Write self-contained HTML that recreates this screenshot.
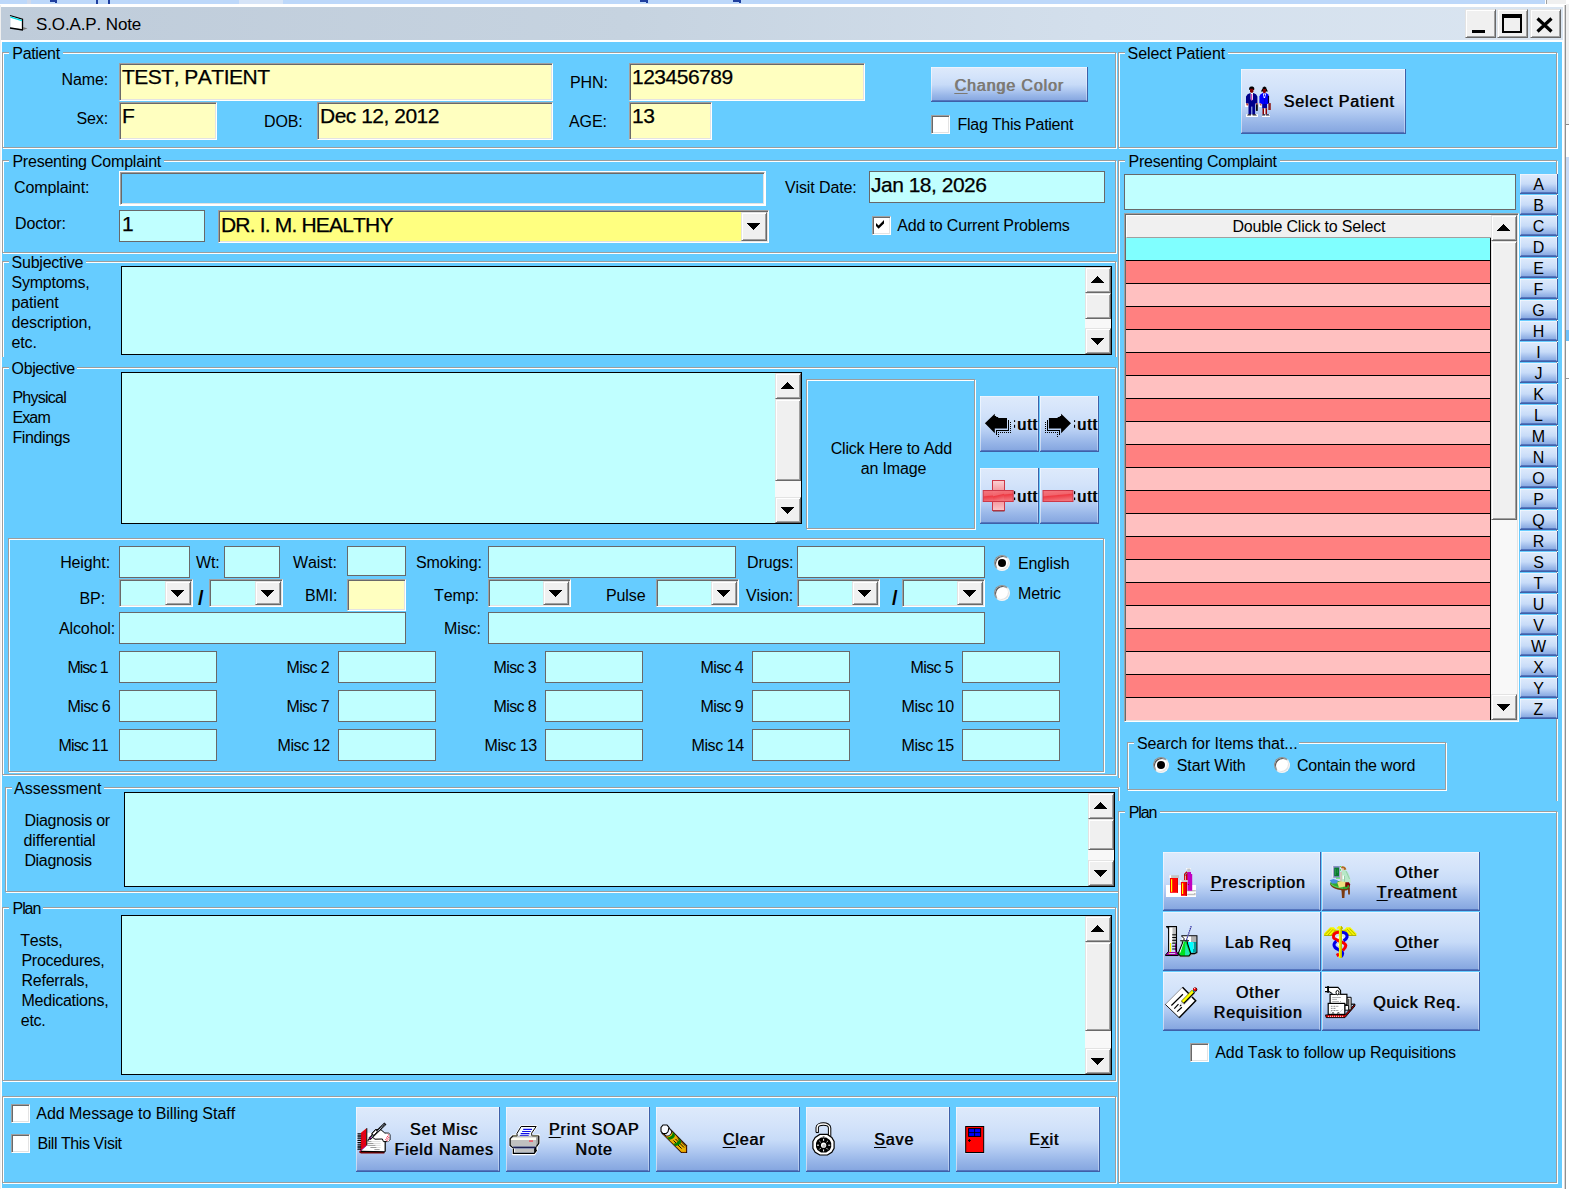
<!DOCTYPE html>
<html><head><meta charset="utf-8"><title>S.O.A.P. Note</title>
<style>
html,body{margin:0;padding:0}
body{width:1569px;height:1189px;overflow:hidden;background:#fff;position:relative;font-family:"Liberation Sans",sans-serif;font-kerning:none;color:#000}
body *{position:absolute;box-sizing:border-box}
.t{white-space:nowrap;font-size:16px;letter-spacing:-0.12px}
.fbg{background:#66CCFF}
.fr{border:1px solid #9D9D9D;box-shadow:1px 1px 0 #fff, inset 1px 1px 0 #fff}
.fl{background:#66CCFF}
.sunk{border:1px solid;border-color:#A0A0A0 #fff #fff #A0A0A0;box-shadow:inset 1px 1px 0 #696969, inset -1px -1px 0 #E3E3E3;overflow:hidden}
.flat{border:1px solid #707070;overflow:hidden}
.et{white-space:nowrap;letter-spacing:-0.5px;-webkit-text-stroke:0.25px #000}
.ta{border:1px solid #000;background:#C0FFFF}
.btn{background:linear-gradient(#DEEAFB 0%,#D3E3FA 30%,#C7DBF8 52%,#B0C9F1 68%,#98B6E8 84%,#84A5DF 100%);border-right:1px solid #3F60A8;border-bottom:1px solid #3F60A8;box-shadow:inset -1px 0 0 rgba(255,255,255,.35),inset 0 1px 0 rgba(255,255,255,.45),inset 1px 0 0 rgba(255,255,255,.5),inset 0 -1px 0 #5475BE;overflow:hidden}
.bt{width:200px;text-align:center;white-space:nowrap;font-size:16px;line-height:18px;letter-spacing:0.88px;text-shadow:0.75px 0 0 rgba(0,0,0,.8)}
.bt u{position:static;text-decoration:underline;text-decoration-thickness:1px;text-underline-offset:2px}
.sb{background:#F8F8F8}
.sbb{background:#F0F0F0;border:1px solid;border-color:#E3E3E3 #696969 #696969 #E3E3E3;box-shadow:inset 1px 1px 0 #fff,inset -1px -1px 0 #A0A0A0}
.ar{left:50%;top:50%;margin-left:-7px;margin-top:-4px}
.chk{width:19px;height:19px;background:#fff;border:1px solid;border-color:#A0A0A0 #fff #fff #A0A0A0;box-shadow:inset 1px 1px 0 #696969, inset -1px -1px 0 #E3E3E3}
.rad{width:16px;height:16px;border-radius:50%;background:#fff;border:1px solid;border-color:#909090 #F4F4F4 #F4F4F4 #909090;box-shadow:inset 1px 1px 0 #555,inset -1px -1px 0 #E3E3E3}
.rad i{left:3px;top:3px;width:8px;height:8px;border-radius:50%;background:#000}
.az{font-size:16px;line-height:18px;text-align:center}

</style></head>
<body>
<div style="left:0;top:0;width:1569px;height:4px;background:#F0F0F0"></div>
<div style="left:0;top:0;width:1545px;height:4px;background:#BDD8FA"></div>
<div style="left:1545px;top:0;width:1px;height:4px;background:#fff"></div><div style="left:1546px;top:0;width:1px;height:4px;background:#A0A0A0"></div>
<div style="left:50px;top:0;width:7px;height:2px;background:#1F3F9F"></div>
<div style="left:55px;top:0;width:2px;height:3px;background:#1F3F9F"></div>
<div style="left:96px;top:0;width:2px;height:4px;background:#1F3F9F"></div>
<div style="left:108px;top:0;width:2px;height:4px;background:#1F3F9F"></div>
<div style="left:640px;top:0;width:8px;height:2px;background:#1F3F9F"></div>
<div style="left:646px;top:0;width:2px;height:3px;background:#1F3F9F"></div>
<div style="left:733px;top:0;width:8px;height:2px;background:#1F3F9F"></div>
<div style="left:739px;top:0;width:2px;height:3px;background:#1F3F9F"></div>
<div style="left:27px;top:0;width:4px;height:4px;background:#D0DAEC"></div>
<div style="left:239px;top:0;width:44px;height:4px;background:#D6E4F7"></div>
<div style="left:1566px;top:0;width:3px;height:1189px;background:#fff"></div>
<div style="left:1566px;top:4px;width:3px;height:120px;background:#F0F0F0"></div>
<div style="left:1566px;top:124px;width:3px;height:1px;background:#8A8A8A"></div>
<div style="left:1566px;top:157px;width:3px;height:173px;background:#C5DAF7"></div>
<div style="left:1566px;top:330px;width:3px;height:11px;background:#6CC0FA"></div>
<div style="left:1566px;top:378px;width:3px;height:1px;background:#9A9A9A"></div>
<div style="left:0;top:4px;width:1566px;height:1185px;background:#fff"></div>
<div style="left:0;top:5px;width:1px;height:1184px;background:#F0F0F0"></div>
<div style="left:1565px;top:5px;width:1px;height:1184px;background:#909090"></div>
<div style="left:1564px;top:5px;width:1px;height:1184px;background:#D8D8D8"></div>
<div style="left:1px;top:7px;width:1562px;height:33px;background:linear-gradient(90deg,#BFCCDA 0%,#C6D3E0 40%,#D3DFEC 70%,#DAE5F1 100%)"></div>
<svg style="left:9px;top:14px" width="20" height="18" viewBox="0 0 20 18"><path d="M1.5 2L13.5 5.5L13.5 15.5L1.5 13.5Z" fill="#fff"/><path d="M1 1.5L13.5 5.2V16M1 14L14 16" stroke="#000" stroke-width="1.3" fill="none"/><path d="M1.5 3.2L13 6.6" stroke="#00E0E8" stroke-width="1.2"/><path d="M14 13L18.5 14.5L14 16Z" fill="#777"/></svg>
<div class="t " style="left:36px;top:15px;font-size:17px;line-height:20px;">S.O.A.P. Note</div>
<div class="sbb" style="left:1465px;top:9px;width:31px;height:29px;background:#F0F0F0"><div style="left:6px;top:20px;width:13px;height:3px;background:#000"></div></div>
<div class="sbb" style="left:1497px;top:9px;width:31px;height:29px;background:#F0F0F0"><div style="left:4px;top:4px;width:20px;height:19px;border:2px solid #000;border-top-width:4px"></div></div>
<div class="sbb" style="left:1530px;top:9px;width:31px;height:29px;background:#F0F0F0"><svg style="left:5px;top:7px" width="17" height="16" viewBox="0 0 17 16"><path d="M1.5 1.5L15.5 14.5M15.5 1.5L1.5 14.5" stroke="#000" stroke-width="3.2"/></svg></div>
<div style="left:2px;top:42px;width:1560px;height:1146px;background:#66CCFF"></div>
<div class="fr" style="left:2px;top:52px;width:1114px;height:96px"></div>
<div class="fbg" style="left:9px;top:52px;width:54px;height:2px"></div>
<div class="t" style="left:12.30px;top:45px;font-size:16px;line-height:18px;letter-spacing:-0.334px">Patient</div>
<div class="t " style="right:1461px;top:71px;font-size:16px;line-height:18px;">Name:</div>
<div class="sunk" style="left:119px;top:63px;width:434px;height:38px;background:#FFFFC0"><span class="et" style="left:2px;top:1px;font-size:21px;line-height:24px">TEST, PATIENT</span></div>
<div class="t " style="right:1461px;top:110px;font-size:16px;line-height:18px;">Sex:</div>
<div class="sunk" style="left:119px;top:102px;width:98px;height:38px;background:#FFFFC0"><span class="et" style="left:2px;top:1px;font-size:21px;line-height:24px">F</span></div>
<div class="t " style="left:264px;top:113px;font-size:16px;line-height:18px;">DOB:</div>
<div class="sunk" style="left:317px;top:102px;width:236px;height:38px;background:#FFFFC0"><span class="et" style="left:2px;top:1px;font-size:21px;line-height:24px">Dec 12, 2012</span></div>
<div class="t " style="left:570px;top:74px;font-size:16px;line-height:18px;">PHN:</div>
<div class="sunk" style="left:629px;top:63px;width:236px;height:38px;background:#FFFFC0"><span class="et" style="left:2px;top:1px;font-size:21px;line-height:24px">123456789</span></div>
<div class="t " style="left:569px;top:113px;font-size:16px;line-height:18px;">AGE:</div>
<div class="sunk" style="left:629px;top:102px;width:83px;height:38px;background:#FFFFC0"><span class="et" style="left:2px;top:1px;font-size:21px;line-height:24px">13</span></div>
<div class="btn " style="left:931px;top:67px;width:157px;height:35px"><div class="bt" style="left:-22px;top:10px;color:#7C7973;text-shadow:0.8px 0 0 #7C7973"><u>C</u>hange Color</div></div>
<div class="chk" style="left:931px;top:115px"></div>
<div class="t" style="left:957.50px;top:116px;line-height:18px;letter-spacing:-0.264px;">Flag This Patient</div>
<div class="fr" style="left:2px;top:160px;width:1114px;height:93px"></div>
<div class="fbg" style="left:9px;top:160px;width:155px;height:2px"></div>
<div class="t" style="left:12.40px;top:153px;font-size:16px;line-height:18px;letter-spacing:-0.213px">Presenting Complaint</div>
<div class="t " style="left:14px;top:179px;font-size:16px;line-height:18px;">Complaint:</div>
<div style="left:119px;top:171px;width:647px;height:35px;border:1px solid #fff"></div>
<div class="sunk" style="left:120px;top:172px;width:645px;height:33px;background:#66CCFF"></div>
<div class="t " style="left:785px;top:179px;font-size:16px;line-height:18px;">Visit Date:</div>
<div class="flat" style="left:869px;top:171px;width:236px;height:32px;background:#C0FFFF;border-color:#686868"><span class="et" style="left:1px;top:1px;font-size:21px;line-height:24px">Jan 18, 2026</span></div>
<div class="t " style="left:15px;top:215px;font-size:16px;line-height:18px;">Doctor:</div>
<div class="flat" style="left:119px;top:210px;width:86px;height:32px;background:#C0FFFF;border-color:#686868"><span class="et" style="left:2px;top:1px;font-size:21px;line-height:24px">1</span></div>
<div class="sunk" style="left:218px;top:210px;width:551px;height:33px;background:#FFFF80"><span class="et" style="left:2px;top:2px;font-size:21px;line-height:24px"><span style="position:static;letter-spacing:-0.82px">DR. I. M. HEALTHY</span></span><div class="sbb" style="right:1px;top:1px;width:26px;height:29px"><svg style="left:5px;top:10px" width="13" height="7" viewBox="0 0 13 7" shape-rendering="crispEdges"><path d="M0 0h13v1h-13zM1 1h11v1h-11zM2 2h9v1h-9zM3 3h7v1h-7zM4 4h5v1h-5zM5 5h3v1h-3zM6 6h1v1h-1z" fill="#000"/></svg></div></div>
<div class="chk" style="left:872px;top:216px"><svg width="10" height="10" viewBox="0 0 10 10" style="position:absolute;left:3px;top:3px"><path d="M0 3L0 6L2.6 8.8L8 3.4L8 0L2.6 5.6Z" fill="#000"/></svg></div>
<div class="t" style="left:897.20px;top:217px;line-height:18px;letter-spacing:-0.155px;">Add to Current Problems</div>
<div class="fr" style="left:2px;top:261px;width:1114px;height:104px"></div>
<div class="fbg" style="left:9px;top:261px;width:77px;height:2px"></div>
<div class="t" style="left:11.50px;top:254px;font-size:16px;line-height:18px;letter-spacing:-0.219px">Subjective</div>
<div class="t" style="left:11.50px;top:274px;line-height:18px;letter-spacing:-0.237px;">Symptoms,</div>
<div class="t" style="left:11.50px;top:294px;line-height:18px;letter-spacing:-0.123px;">patient</div>
<div class="t" style="left:11.50px;top:314px;line-height:18px;letter-spacing:-0.140px;">description,</div>
<div class="t" style="left:11.50px;top:334px;line-height:18px;letter-spacing:-0.153px;">etc.</div>
<div class="ta" style="left:121px;top:266px;width:991px;height:89px"></div>
<div class="sb" style="left:1085px;top:267px;width:26px;height:87px"><div class="sbb" style="left:0;top:0;width:26px;height:26px"><svg style="left:5px;top:8px" width="13" height="7" viewBox="0 0 13 7" shape-rendering="crispEdges"><path d="M6 0h1v1h-1zM5 1h3v1h-3zM4 2h5v1h-5zM3 3h7v1h-7zM2 4h9v1h-9zM1 5h11v1h-11zM0 6h13v1h-13z" fill="#000"/></svg></div><div class="sbb" style="left:0;top:61px;width:26px;height:26px"><svg style="left:5px;top:9px" width="13" height="7" viewBox="0 0 13 7" shape-rendering="crispEdges"><path d="M0 0h13v1h-13zM1 1h11v1h-11zM2 2h9v1h-9zM3 3h7v1h-7zM4 4h5v1h-5zM5 5h3v1h-3zM6 6h1v1h-1z" fill="#000"/></svg></div><div class="sbb" style="left:0;top:26px;width:26px;height:26px"></div></div>
<div class="fbg" style="left:2px;top:357px;width:1115px;height:419px"></div>
<div class="fr" style="left:2px;top:367px;width:1114px;height:408px"></div>
<div class="fbg" style="left:9px;top:367px;width:68px;height:2px"></div>
<div class="t" style="left:11.60px;top:360px;font-size:16px;line-height:18px;letter-spacing:-0.393px">Objective</div>
<div class="t" style="left:12.40px;top:389px;line-height:18px;letter-spacing:-0.735px;">Physical</div>
<div class="t" style="left:12.40px;top:409px;line-height:18px;letter-spacing:-0.859px;">Exam</div>
<div class="t" style="left:12.40px;top:429px;line-height:18px;letter-spacing:-0.376px;">Findings</div>
<div class="ta" style="left:121px;top:372px;width:681px;height:152px"></div>
<div class="sb" style="left:775px;top:373px;width:26px;height:150px"><div class="sbb" style="left:0;top:0;width:26px;height:26px"><svg style="left:5px;top:8px" width="13" height="7" viewBox="0 0 13 7" shape-rendering="crispEdges"><path d="M6 0h1v1h-1zM5 1h3v1h-3zM4 2h5v1h-5zM3 3h7v1h-7zM2 4h9v1h-9zM1 5h11v1h-11zM0 6h13v1h-13z" fill="#000"/></svg></div><div class="sbb" style="left:0;top:124px;width:26px;height:26px"><svg style="left:5px;top:9px" width="13" height="7" viewBox="0 0 13 7" shape-rendering="crispEdges"><path d="M0 0h13v1h-13zM1 1h11v1h-11zM2 2h9v1h-9zM3 3h7v1h-7zM4 4h5v1h-5zM5 5h3v1h-3zM6 6h1v1h-1z" fill="#000"/></svg></div><div class="sbb" style="left:0;top:26px;width:26px;height:82px"></div></div>
<div class="fr" style="left:806px;top:379px;width:169px;height:150px"></div>
<div class="t" style="left:830.70px;top:440px;line-height:18px;letter-spacing:-0.193px;">Click Here to Add</div>
<div class="t" style="left:860.70px;top:460px;line-height:18px;letter-spacing:-0.151px;">an Image</div>
<div class="btn " style="left:980px;top:396px;width:59px;height:56px"><svg style="left:0;top:0" width="59" height="56" viewBox="0 0 59 56"><g transform="translate(-2,4)"><path d="M6.9 23.3L16.8 13.7V16L18.2 16L18.2 17L20.2 17V18.1H29V28.6H16.8V33.2Z" fill="#000"/><path d="M30.5 20V30.5H18.5V35" stroke="#000" stroke-width="1" fill="none" shape-rendering="crispEdges"/><path d="M32.5 22V32.5H20.5V37" stroke="#000" stroke-width="1" stroke-dasharray="1 1" fill="none" shape-rendering="crispEdges"/><rect x="36" y="20.2" width="1.1" height="1.8" fill="#000"/><rect x="36" y="24.8" width="1.1" height="3" fill="#000"/></g></svg><div class="t" style="left:37px;top:20px;font-size:16px;line-height:18px;letter-spacing:1px;text-shadow:0.8px 0 0 #000">utt</div></div>
<div class="btn " style="left:1040px;top:396px;width:59px;height:56px"><svg style="left:0;top:0" width="59" height="56" viewBox="0 0 59 56"><g transform="translate(37.9,4)"><g transform="scale(-1,1)"><path d="M6.9 23.3L16.8 13.7V16L18.2 16L18.2 17L20.2 17V18.1H29V28.6H16.8V33.2Z" fill="#000"/><path d="M30.5 20V30.5H18.5V35" stroke="#000" stroke-width="1" fill="none" shape-rendering="crispEdges"/><path d="M32.5 22V32.5H20.5V37" stroke="#000" stroke-width="1" stroke-dasharray="1 1" fill="none" shape-rendering="crispEdges"/><rect x="2.8" y="20.2" width="1.1" height="1.8" fill="#000"/><rect x="2.8" y="24.8" width="1.1" height="3" fill="#000"/></g></g></svg><div class="t" style="left:37px;top:20px;font-size:16px;line-height:18px;letter-spacing:1px;text-shadow:0.8px 0 0 #000">utt</div></div>
<div class="btn " style="left:980px;top:468px;width:59px;height:56px"><svg style="left:0;top:0" width="59" height="56" viewBox="0 0 59 56"><defs><linearGradient id="pv" x1="0" y1="0" x2="0" y2="1"><stop offset="0" stop-color="#FBD2D4"/><stop offset="0.3" stop-color="#F6A0A6"/><stop offset="0.5" stop-color="#EE3A44"/><stop offset="0.7" stop-color="#F59AA0"/><stop offset="1" stop-color="#FAC6CA"/></linearGradient><linearGradient id="ph" x1="0" y1="0" x2="0.25" y2="1"><stop offset="0" stop-color="#F47880"/><stop offset="0.45" stop-color="#F2646C"/><stop offset="0.55" stop-color="#EE3A44"/><stop offset="1" stop-color="#F27078"/></linearGradient></defs><rect x="12.5" y="12.5" width="12" height="30" fill="url(#pv)" stroke="#CC3848" stroke-width="1"/><rect x="3.2" y="22.5" width="30" height="11" fill="url(#ph)" stroke="#CC3848" stroke-width="1"/><rect x="13" y="23" width="11" height="10" fill="url(#ph)"/><rect x="13" y="42.6" width="11.5" height="0.9" fill="#8A3038"/><rect x="34" y="23.2" width="1.2" height="3" fill="#000"/><rect x="34" y="29.5" width="1.2" height="2.6" fill="#000"/></svg><div class="t" style="left:37px;top:20px;font-size:16px;line-height:18px;letter-spacing:1px;text-shadow:0.8px 0 0 #000">utt</div></div>
<div class="btn " style="left:1040px;top:468px;width:59px;height:56px"><svg style="left:0;top:0" width="59" height="56" viewBox="0 0 59 56"><rect x="3" y="22.5" width="30" height="11" fill="url(#ph)" stroke="#CC3848" stroke-width="1"/><rect x="34" y="23.2" width="1.2" height="3" fill="#000"/><rect x="34" y="29.5" width="1.2" height="2.6" fill="#000"/></svg><div class="t" style="left:37px;top:20px;font-size:16px;line-height:18px;letter-spacing:1px;text-shadow:0.8px 0 0 #000">utt</div></div>
<div class="fr" style="left:8px;top:538px;width:1096px;height:234px"></div>
<div class="t " style="right:1459px;top:554px;font-size:16px;line-height:18px;">Height:</div>
<div class="flat" style="left:119px;top:546px;width:71px;height:32px;background:#C0FFFF;border-color:#686868"></div>
<div class="t " style="left:196px;top:554px;font-size:16px;line-height:18px;">Wt:</div>
<div class="flat" style="left:224px;top:546px;width:56px;height:32px;background:#C0FFFF;border-color:#686868"></div>
<div class="t " style="left:293px;top:554px;font-size:16px;line-height:18px;">Waist:</div>
<div class="flat" style="left:347px;top:546px;width:59px;height:30px;background:#C0FFFF;border-color:#686868"></div>
<div class="t " style="left:416px;top:554px;font-size:16px;line-height:18px;">Smoking:</div>
<div class="flat" style="left:488px;top:546px;width:248px;height:32px;background:#C0FFFF;border-color:#686868"></div>
<div class="t " style="left:747px;top:554px;font-size:16px;line-height:18px;">Drugs:</div>
<div class="flat" style="left:797px;top:546px;width:188px;height:32px;background:#C0FFFF;border-color:#686868"></div>
<div class="rad" style="left:994px;top:555px"><i></i></div>
<div class="t " style="left:1018px;top:555px;font-size:16px;line-height:18px;">English</div>
<div class="t " style="right:1464px;top:590px;font-size:16px;line-height:18px;">BP:</div>
<div class="sunk" style="left:119px;top:579px;width:74px;height:28px;background:#C0FFFF"><div class="sbb" style="right:1px;top:1px;width:26px;height:24px"><svg style="left:5px;top:8px" width="13" height="7" viewBox="0 0 13 7" shape-rendering="crispEdges"><path d="M0 0h13v1h-13zM1 1h11v1h-11zM2 2h9v1h-9zM3 3h7v1h-7zM4 4h5v1h-5zM5 5h3v1h-3zM6 6h1v1h-1z" fill="#000"/></svg></div></div>
<div class="t " style="left:198px;top:587px;font-size:20px;line-height:22px;font-weight:bold">/</div>
<div class="sunk" style="left:209px;top:579px;width:74px;height:28px;background:#C0FFFF"><div class="sbb" style="right:1px;top:1px;width:26px;height:24px"><svg style="left:5px;top:8px" width="13" height="7" viewBox="0 0 13 7" shape-rendering="crispEdges"><path d="M0 0h13v1h-13zM1 1h11v1h-11zM2 2h9v1h-9zM3 3h7v1h-7zM4 4h5v1h-5zM5 5h3v1h-3zM6 6h1v1h-1z" fill="#000"/></svg></div></div>
<div class="t " style="left:305px;top:587px;font-size:16px;line-height:18px;">BMI:</div>
<div class="sunk" style="left:347px;top:579px;width:59px;height:32px;background:#FFFFC0"></div>
<div class="t " style="left:434px;top:587px;font-size:16px;line-height:18px;">Temp:</div>
<div class="sunk" style="left:488px;top:579px;width:83px;height:28px;background:#C0FFFF"><div class="sbb" style="right:1px;top:1px;width:26px;height:24px"><svg style="left:5px;top:8px" width="13" height="7" viewBox="0 0 13 7" shape-rendering="crispEdges"><path d="M0 0h13v1h-13zM1 1h11v1h-11zM2 2h9v1h-9zM3 3h7v1h-7zM4 4h5v1h-5zM5 5h3v1h-3zM6 6h1v1h-1z" fill="#000"/></svg></div></div>
<div class="t " style="left:606px;top:587px;font-size:16px;line-height:18px;">Pulse</div>
<div class="sunk" style="left:656px;top:579px;width:83px;height:28px;background:#C0FFFF"><div class="sbb" style="right:1px;top:1px;width:26px;height:24px"><svg style="left:5px;top:8px" width="13" height="7" viewBox="0 0 13 7" shape-rendering="crispEdges"><path d="M0 0h13v1h-13zM1 1h11v1h-11zM2 2h9v1h-9zM3 3h7v1h-7zM4 4h5v1h-5zM5 5h3v1h-3zM6 6h1v1h-1z" fill="#000"/></svg></div></div>
<div class="t " style="left:746px;top:587px;font-size:16px;line-height:18px;">Vision:</div>
<div class="sunk" style="left:797px;top:579px;width:83px;height:28px;background:#C0FFFF"><div class="sbb" style="right:1px;top:1px;width:26px;height:24px"><svg style="left:5px;top:8px" width="13" height="7" viewBox="0 0 13 7" shape-rendering="crispEdges"><path d="M0 0h13v1h-13zM1 1h11v1h-11zM2 2h9v1h-9zM3 3h7v1h-7zM4 4h5v1h-5zM5 5h3v1h-3zM6 6h1v1h-1z" fill="#000"/></svg></div></div>
<div class="t " style="left:892px;top:587px;font-size:20px;line-height:22px;font-weight:bold">/</div>
<div class="sunk" style="left:902px;top:579px;width:83px;height:28px;background:#C0FFFF"><div class="sbb" style="right:1px;top:1px;width:26px;height:24px"><svg style="left:5px;top:8px" width="13" height="7" viewBox="0 0 13 7" shape-rendering="crispEdges"><path d="M0 0h13v1h-13zM1 1h11v1h-11zM2 2h9v1h-9zM3 3h7v1h-7zM4 4h5v1h-5zM5 5h3v1h-3zM6 6h1v1h-1z" fill="#000"/></svg></div></div>
<div class="rad" style="left:994px;top:585px"></div>
<div class="t " style="left:1018px;top:585px;font-size:16px;line-height:18px;">Metric</div>
<div class="t " style="left:59px;top:620px;font-size:16px;line-height:18px;">Alcohol:</div>
<div class="flat" style="left:119px;top:612px;width:287px;height:32px;background:#C0FFFF;border-color:#686868"></div>
<div class="t " style="left:444px;top:620px;font-size:16px;line-height:18px;">Misc:</div>
<div class="flat" style="left:488px;top:612px;width:497px;height:32px;background:#C0FFFF;border-color:#686868"></div>
<div class="flat" style="left:119px;top:651px;width:98px;height:32px;background:#C0FFFF;border-color:#686868"></div>
<div class="t" style="left:67.50px;top:659px;line-height:18px;letter-spacing:-1.029px;">Misc 1</div>
<div class="flat" style="left:338px;top:651px;width:98px;height:32px;background:#C0FFFF;border-color:#686868"></div>
<div class="t" style="left:286.50px;top:659px;line-height:18px;letter-spacing:-0.609px;">Misc 2</div>
<div class="flat" style="left:545px;top:651px;width:98px;height:32px;background:#C0FFFF;border-color:#686868"></div>
<div class="t" style="left:493.50px;top:659px;line-height:18px;letter-spacing:-0.609px;">Misc 3</div>
<div class="flat" style="left:752px;top:651px;width:98px;height:32px;background:#C0FFFF;border-color:#686868"></div>
<div class="t" style="left:700.50px;top:659px;line-height:18px;letter-spacing:-0.609px;">Misc 4</div>
<div class="flat" style="left:962px;top:651px;width:98px;height:32px;background:#C0FFFF;border-color:#686868"></div>
<div class="t" style="left:910.50px;top:659px;line-height:18px;letter-spacing:-0.609px;">Misc 5</div>
<div class="flat" style="left:119px;top:690px;width:98px;height:32px;background:#C0FFFF;border-color:#686868"></div>
<div class="t" style="left:67.50px;top:698px;line-height:18px;letter-spacing:-0.609px;">Misc 6</div>
<div class="flat" style="left:338px;top:690px;width:98px;height:32px;background:#C0FFFF;border-color:#686868"></div>
<div class="t" style="left:286.50px;top:698px;line-height:18px;letter-spacing:-0.609px;">Misc 7</div>
<div class="flat" style="left:545px;top:690px;width:98px;height:32px;background:#C0FFFF;border-color:#686868"></div>
<div class="t" style="left:493.50px;top:698px;line-height:18px;letter-spacing:-0.609px;">Misc 8</div>
<div class="flat" style="left:752px;top:690px;width:98px;height:32px;background:#C0FFFF;border-color:#686868"></div>
<div class="t" style="left:700.50px;top:698px;line-height:18px;letter-spacing:-0.609px;">Misc 9</div>
<div class="flat" style="left:962px;top:690px;width:98px;height:32px;background:#C0FFFF;border-color:#686868"></div>
<div class="t" style="left:901.50px;top:698px;line-height:18px;letter-spacing:-0.408px;">Misc 10</div>
<div class="flat" style="left:119px;top:729px;width:98px;height:32px;background:#C0FFFF;border-color:#686868"></div>
<div class="t" style="left:58.50px;top:737px;line-height:18px;letter-spacing:-0.842px;">Misc 11</div>
<div class="flat" style="left:338px;top:729px;width:98px;height:32px;background:#C0FFFF;border-color:#686868"></div>
<div class="t" style="left:277.50px;top:737px;line-height:18px;letter-spacing:-0.408px;">Misc 12</div>
<div class="flat" style="left:545px;top:729px;width:98px;height:32px;background:#C0FFFF;border-color:#686868"></div>
<div class="t" style="left:484.50px;top:737px;line-height:18px;letter-spacing:-0.408px;">Misc 13</div>
<div class="flat" style="left:752px;top:729px;width:98px;height:32px;background:#C0FFFF;border-color:#686868"></div>
<div class="t" style="left:691.50px;top:737px;line-height:18px;letter-spacing:-0.408px;">Misc 14</div>
<div class="flat" style="left:962px;top:729px;width:98px;height:32px;background:#C0FFFF;border-color:#686868"></div>
<div class="t" style="left:901.50px;top:737px;line-height:18px;letter-spacing:-0.408px;">Misc 15</div>
<div class="fbg" style="left:5px;top:778px;width:1115px;height:115px"></div>
<div class="fr" style="left:5px;top:787px;width:1114px;height:105px"></div>
<div class="fbg" style="left:12px;top:787px;width:92px;height:2px"></div>
<div class="t" style="left:14.00px;top:780px;font-size:16px;line-height:18px;letter-spacing:0.031px">Assessment</div>
<div class="t" style="left:24.40px;top:812px;line-height:18px;letter-spacing:-0.288px;">Diagnosis or</div>
<div class="t" style="left:23.60px;top:832px;line-height:18px;letter-spacing:-0.168px;">differential</div>
<div class="t" style="left:24.40px;top:852px;line-height:18px;letter-spacing:-0.327px;">Diagnosis</div>
<div class="ta" style="left:124px;top:792px;width:991px;height:95px"></div>
<div class="sb" style="left:1088px;top:793px;width:26px;height:93px"><div class="sbb" style="left:0;top:0;width:26px;height:26px"><svg style="left:5px;top:8px" width="13" height="7" viewBox="0 0 13 7" shape-rendering="crispEdges"><path d="M6 0h1v1h-1zM5 1h3v1h-3zM4 2h5v1h-5zM3 3h7v1h-7zM2 4h9v1h-9zM1 5h11v1h-11zM0 6h13v1h-13z" fill="#000"/></svg></div><div class="sbb" style="left:0;top:67px;width:26px;height:26px"><svg style="left:5px;top:9px" width="13" height="7" viewBox="0 0 13 7" shape-rendering="crispEdges"><path d="M0 0h13v1h-13zM1 1h11v1h-11zM2 2h9v1h-9zM3 3h7v1h-7zM4 4h5v1h-5zM5 5h3v1h-3zM6 6h1v1h-1z" fill="#000"/></svg></div><div class="sbb" style="left:0;top:26px;width:26px;height:31px"></div></div>
<div class="fbg" style="left:2px;top:897px;width:1115px;height:185px"></div>
<div class="fr" style="left:2px;top:907px;width:1114px;height:174px"></div>
<div class="fbg" style="left:9px;top:907px;width:34px;height:2px"></div>
<div class="t" style="left:12.60px;top:900px;font-size:16px;line-height:18px;letter-spacing:-1.114px">Plan</div>
<div class="t" style="left:20.20px;top:932px;line-height:18px;letter-spacing:-0.188px;">Tests,</div>
<div class="t" style="left:21.50px;top:952px;line-height:18px;letter-spacing:-0.306px;">Procedures,</div>
<div class="t" style="left:21.50px;top:972px;line-height:18px;letter-spacing:-0.239px;">Referrals,</div>
<div class="t" style="left:21.50px;top:992px;line-height:18px;letter-spacing:-0.249px;">Medications,</div>
<div class="t" style="left:20.80px;top:1012px;line-height:18px;letter-spacing:-0.286px;">etc.</div>
<div class="ta" style="left:121px;top:915px;width:991px;height:160px"></div>
<div class="sb" style="left:1085px;top:916px;width:26px;height:158px"><div class="sbb" style="left:0;top:0;width:26px;height:26px"><svg style="left:5px;top:8px" width="13" height="7" viewBox="0 0 13 7" shape-rendering="crispEdges"><path d="M6 0h1v1h-1zM5 1h3v1h-3zM4 2h5v1h-5zM3 3h7v1h-7zM2 4h9v1h-9zM1 5h11v1h-11zM0 6h13v1h-13z" fill="#000"/></svg></div><div class="sbb" style="left:0;top:132px;width:26px;height:26px"><svg style="left:5px;top:9px" width="13" height="7" viewBox="0 0 13 7" shape-rendering="crispEdges"><path d="M0 0h13v1h-13zM1 1h11v1h-11zM2 2h9v1h-9zM3 3h7v1h-7zM4 4h5v1h-5zM5 5h3v1h-3zM6 6h1v1h-1z" fill="#000"/></svg></div><div class="sbb" style="left:0;top:26px;width:26px;height:89px"></div></div>
<div class="fr" style="left:2px;top:1096px;width:1114px;height:87px"></div>
<div class="chk" style="left:11px;top:1104px"></div>
<div class="t" style="left:36.30px;top:1105px;line-height:18px;letter-spacing:-0.049px;">Add Message to Billing Staff</div>
<div class="chk" style="left:11px;top:1134px"></div>
<div class="t" style="left:37.40px;top:1135px;line-height:18px;letter-spacing:-0.429px;">Bill This Visit</div>
<div class="btn " style="left:356px;top:1107px;width:144px;height:65px"><svg style="left:0;top:0" width="44" height="56" viewBox="0 0 44 56"><g transform="translate(-3,6)"><path d="M6.2 38.4L7.8 37.2L31.4 38.4L31.4 40.6L8 40.6L6.2 39.6Z" fill="#800000"/><path d="M14 19.8H32.4V38.4L8 38.2L14 32.4Z" fill="#fff"/><path d="M14.4 28.6H18.6M14.4 30.5H20.6M14.4 32.4H22.6M17.4 34.5H23.6M21.4 36.6H26.6" stroke="#808080" stroke-width="0.8"/><path d="M18.6 28.6H27.6M20.6 30.5H27.6M22.6 32.4H27.6M23.6 34.5H27.6" stroke="#D0D0D0" stroke-width="0.7"/><path d="M8 38.4L32 38.8M32.2 27.2V38.8" stroke="#000" stroke-width="1.2" fill="none"/><path d="M8 19.8L13.5 15.3V32.4L7.4 37.8Z" fill="#F00000"/><path d="M8.6 21.5L12.8 18M8.6 24L12.8 20.6M8.6 26.6L12.8 23.2M8.6 29.2L12.8 25.8M8.6 31.8L12.8 28.4M8.6 34.4L12.8 31" stroke="#9000A0" stroke-width="0.8" stroke-dasharray="0.9 0.9"/><path d="M13.8 15.2V32.4" stroke="#000" stroke-width="1"/><path d="M7.4 37.8L13.6 32.4" stroke="#9000A0" stroke-width="0.8"/><path d="M5 20.8H7.6M5 23H7.6M5 25.2H7.6M5 27.4H7.6M5 29.6H7.6M5 31.8H7.6M5 34H7.6M5 36.2H7.6" stroke="#000" stroke-width="1.3" stroke-linecap="round"/><path d="M18.9 20.4L22.3 16.6L28 16.8L31.8 20L35.6 20.2L37 21.4V27L34.4 28.6H30.4L29.4 26L22 26.2L19.4 24.2Z" fill="#fff" stroke="#000" stroke-width="1"/><path d="M33 20.8H36.4V27.8L34.4 28.4L31.6 27.2Z" fill="#fff"/><path d="M32.6 27L35.8 21.4M33.8 28L36.4 23.6" stroke="#F02040" stroke-width="1.2" stroke-dasharray="0.9 0.9"/><path d="M16.4 26L32.4 10.5" stroke="#000" stroke-width="3"/><path d="M18 24.5L32 11" stroke="#D8E8FF" stroke-width="1.2" stroke-dasharray="0.9 0.7"/><path d="M14.6 27.6L16.6 25.8" stroke="#000" stroke-width="1.2"/><path d="M16.6 25.4L17.8 24.2" stroke="#9000A0" stroke-width="1.4"/><path d="M19.2 20.4L22.6 17L24.4 18.6L20.6 22.6Z" fill="#fff" stroke="#000" stroke-width="0.9"/></g></svg><div class="bt" style="left:-12px;top:14px;">Set Misc</div><div class="bt" style="left:-12px;top:34px;">Field Names</div></div>
<div class="btn " style="left:506px;top:1107px;width:144px;height:65px"><svg style="left:0;top:0" width="44" height="56" viewBox="0 0 44 56"><g transform="translate(-3,6)"><path d="M18.1 13.5L33.2 13.5L28.6 20.2L29 23.5L35.9 22.5V30.4L33.6 33.6V36.6L31.4 41H10.2V35.4L7.1 32.6V25.7L10.1 22.7L14.2 22.7L13.9 20.6Z" fill="none" stroke="#fff" stroke-width="2.4" stroke-linejoin="round"/><path d="M18.1 13.5L33.2 13.5L28.6 20.2L29 23.6H14.3L13.9 20.6Z" fill="#F4FAFF" stroke="#000" stroke-width="1"/><path d="M20.2 16.4H29M19.1 18.5H27.8M17.7 20.6H26.5M16.8 22.5H25.7" stroke="#1010E8" stroke-width="1.1"/><path d="M10.1 22.7H35.7V30.3L33.2 33.6H10.1L7.1 32.4V25.7Z" fill="#C0C0C0"/><path d="M10.1 22.9L14 22.9M29.2 22.9H35.7" stroke="#505030" stroke-width="1.2"/><path d="M8 25.7L10.4 24.4H33.2V26.9H8Z" fill="#FFFFF4"/><path d="M33.2 24.4L35.7 22.7V30.3L33.2 33.6Z" fill="#A0A0A0"/><path d="M10.1 22.7L7.1 25.7V32.4L10.1 34.9M35.8 22.7V30.3L33.4 33.6" stroke="#000" stroke-width="1.2" fill="none"/><rect x="26" y="27.3" width="4" height="1.5" fill="#F05060"/><rect x="10.1" y="33.6" width="23.1" height="1.8" fill="#202050"/><path d="M10.9 35.7H31.1V39.5H10.9Z" fill="#C0C0C0"/><rect x="10.9" y="35.7" width="1.2" height="3.8" fill="#fff"/><path d="M31.1 35.7L33.4 33.6V36.8L31.1 39.8Z" fill="#000"/><path d="M10.4 35.4V40.3H31.2L33.6 37" stroke="#000" stroke-width="1.3" fill="none"/></g></svg><div class="bt" style="left:-12px;top:14px;"><u>P</u>rint SOAP</div><div class="bt" style="left:-12px;top:34px;">Note</div></div>
<div class="btn " style="left:656px;top:1107px;width:144px;height:65px"><svg style="left:0;top:0" width="44" height="56" viewBox="0 0 44 56"><g transform="translate(-3,6)"><path d="M14.3 12.6L34.1 32.4V40H28.2L8.4 20.2Z" fill="#000"/><path d="M15 14.6L33.2 32.8V39.2H28.6L10 21Z" fill="#E8B000"/><path d="M22.5 26L31 34.5M24.5 25L32.6 33M20.5 27.5L28.6 35.6" stroke="#000" stroke-width="0.9"/><path d="M15 14.6L33.2 32.8V39.2H28.6L10 21Z" fill="none" stroke="#C01000" stroke-width="0.6" stroke-dasharray="0.8 0.8"/><path d="M19.4 18.8C20.4 21.6 17.8 24.4 14 24.6L16.2 26.8C20 26.4 22.8 23.8 21.6 21Z" fill="#008000"/><path d="M25.6 25C26.6 27.8 24 30.6 20.2 30.8L22.4 33C26.2 32.6 29 30 27.8 27.2Z" fill="#008000"/><path d="M14 13.4L18.6 18C19 21 16.4 23.4 13 23L9 19Z" fill="#F0F4FF" stroke="#000" stroke-width="0.9"/><path d="M10 12L14 12L16 14.4L15 18.8L13 20.6L9.8 20.6L8 18.4V14.4Z" fill="#F8FAFF" stroke="#000" stroke-width="1.1"/></g></svg><div class="bt" style="left:-12px;top:24px;"><u>C</u>lear</div></div>
<div class="btn " style="left:806px;top:1107px;width:144px;height:65px"><svg style="left:0;top:0" width="44" height="56" viewBox="0 0 44 56"><g transform="translate(-3,6)"><path d="M14.2 19V14.6C14.2 12.2 17.2 11 20.4 11C23.6 11 26.6 12.4 26.6 15V23" stroke="#000" stroke-width="3.4" fill="none"/><path d="M14.2 19V14.6C14.2 12.2 17.2 11 20.4 11C23.6 11 26.6 12.4 26.6 15V23" stroke="#fff" stroke-width="1.4" fill="none"/><path d="M12.8 19.5H15.8" stroke="#000" stroke-width="1.1"/><path d="M16.8 21.4H24.4L28.8 24.4L31.1 28.4V35.4L28.8 39.2L24.4 42H16.8L12.2 39.2L9.9 35.4V28.4L12.2 24.4Z" fill="#fff" stroke="#000" stroke-width="1.2"/><path d="M18 24.4H23.2L26.8 27L28.2 30V34L26.8 37L23.2 39.6H18L14.4 37L13 34V30L14.4 27Z" fill="#000"/><path d="M19.4 23.4H21.8L20.6 24.8Z" fill="#000"/><path d="M20.6 25.8V27.8M20.6 36.4V38.4M14 32.2H16M25.2 32.2H27.2M16.4 28L17.6 29.2M24.8 28L23.6 29.2M16.4 36.4L17.6 35.2M24.8 36.4L23.6 35.2" stroke="#fff" stroke-width="1"/><circle cx="20.6" cy="32.2" r="2.6" fill="#fff"/><circle cx="21" cy="32.8" r="1.8" fill="#C8C8C8"/></g></svg><div class="bt" style="left:-12px;top:24px;"><u>S</u>ave</div></div>
<div class="btn " style="left:956px;top:1107px;width:144px;height:65px"><svg style="left:0;top:0" width="44" height="64" viewBox="0 0 44 64"><g transform="translate(-3,6)"><rect x="11.7" y="12.5" width="20" height="28" fill="#CFE3FF"/><rect x="12.7" y="13.5" width="18" height="26" fill="#F00" stroke="#000" stroke-width="1"/><rect x="15.6" y="15.6" width="12" height="7.8" fill="#00F" stroke="#000" stroke-width="1"/><path d="M21.6 15.6V23.4M15.6 19.6H27.6" stroke="#000" stroke-width="0.8"/><path d="M15 27.5H17.8M16.4 26.1V28.9" stroke="#000" stroke-width="1.1"/></g></svg><div class="bt" style="left:-12px;top:24px;">E<u>x</u>it</div></div>
<div class="fr" style="left:1118px;top:52px;width:439px;height:96px"></div>
<div class="fbg" style="left:1125px;top:52px;width:103px;height:2px"></div>
<div class="t" style="left:1127.60px;top:45px;font-size:16px;line-height:18px;letter-spacing:-0.089px">Select Patient</div>
<div class="btn " style="left:1241px;top:69px;width:165px;height:65px"><svg style="left:0;top:0" width="44" height="64" viewBox="0 0 44 64"><g transform="translate(-3,9)"><g fill="#fff"><rect x="8" y="36.2" width="12" height="2.8"/><rect x="24" y="36.2" width="8" height="2.8"/><rect x="7" y="25" width="3.6" height="4"/><rect x="21" y="25" width="2.6" height="4"/></g><path d="M11.2 10.2C11.2 7.8 16.2 7.8 16.2 10.2V12H11.2Z" fill="#000"/><path d="M12 10.8H15.4V13.6L14.6 14.7H12.8L12 13.6Z" fill="#800000"/><path d="M9.6 16.2L12.4 14.9H15.4L18 16.2L19.4 18.6V25.6H17.2V26.9H10.5V25.6H8V18.6Z" fill="#00008B"/><path d="M12.6 14.9H15V21.4L13.8 22.6L12.6 21.4Z" fill="#fff"/><rect x="13.1" y="16" width="1.1" height="6.4" fill="#C828B0"/><rect x="10.5" y="26.8" width="2.8" height="9.8" fill="#00008B"/><rect x="14.3" y="26.8" width="2.8" height="9.8" fill="#00008B"/><rect x="11.8" y="26.6" width="4" height="2" fill="#00008B"/><path d="M8 25.6H10.2V27.6H8.6Z" fill="#C04030"/><path d="M18 25.2H19.8V26.8H18Z" fill="#C04030"/><rect x="17.9" y="26.5" width="1.9" height="6.4" fill="#101010"/><path d="M9 37.6L10 36.2H13V37.6ZM14.6 37.6V36.2H17.6L19 37.6Z" fill="#202020"/><path d="M22.9 13.6L25.2 9.2C25.8 8.2 27.2 8.2 27.8 9.2L29.9 13.6Z" fill="#000"/><path d="M24.9 11H27.9V14L27.2 15.2H25.6L24.9 14Z" fill="#800000"/><path d="M22.4 16.4L24.6 15.1H28.2L30.2 16.4L31.1 18.6V25.6L29.2 26.1H24L21.4 25.2V18.6Z" fill="#0000FF"/><path d="M24.9 15.4H28.1L27.2 19.2L26.4 20.2L25.6 19.2Z" fill="#fff"/><path d="M26 16.2H26.9V18.2L26.4 18.8L26 18.2Z" fill="#0000FF"/><path d="M26.4 20.2V25.8" stroke="#0000C0" stroke-width="0.6"/><path d="M30.4 18V25" stroke="#000" stroke-width="0.9"/><rect x="24.2" y="26" width="4.8" height="4.4" fill="#0000A0"/><rect x="24.5" y="30.3" width="1.7" height="6.2" fill="#8B0000"/><rect x="27.3" y="30.3" width="1.7" height="6.2" fill="#8B0000"/><rect x="26.2" y="30.3" width="1.1" height="6.4" fill="#fff"/><path d="M21.5 25.6H23.2L23.6 27.6H22.2Z" fill="#D06050"/><rect x="30.4" y="25.2" width="2.3" height="6.8" fill="#7A1010"/><rect x="31.6" y="25.2" width="1.1" height="6.8" fill="#A04040"/><path d="M24 37.6L24.6 36.2H27.2V37.6ZM28 37.6L28.4 36.2H30.6L31.8 37.6Z" fill="#101030"/></g></svg><div class="bt" style="left:-2px;top:24px;">Select Patient</div></div>
<div class="fr" style="left:1118px;top:160px;width:439px;height:645px"></div>
<div class="fbg" style="left:1125px;top:160px;width:155px;height:2px"></div>
<div class="t" style="left:1128.60px;top:153px;font-size:16px;line-height:18px;letter-spacing:-0.239px">Presenting Complaint</div>
<div class="fbg" style="left:1117px;top:778px;width:4px;height:9px"></div>
<div class="flat" style="left:1124px;top:174px;width:392px;height:36px;background:#C0FFFF;border-color:#686868"></div>
<div class="btn " style="left:1520px;top:174px;width:38px;height:20px"><div class="az" style="left:0;top:2px;width:37px">A</div></div>
<div class="btn " style="left:1520px;top:195px;width:38px;height:20px"><div class="az" style="left:0;top:2px;width:37px">B</div></div>
<div class="btn " style="left:1520px;top:216px;width:38px;height:20px"><div class="az" style="left:0;top:2px;width:37px">C</div></div>
<div class="btn " style="left:1520px;top:237px;width:38px;height:20px"><div class="az" style="left:0;top:2px;width:37px">D</div></div>
<div class="btn " style="left:1520px;top:258px;width:38px;height:20px"><div class="az" style="left:0;top:2px;width:37px">E</div></div>
<div class="btn " style="left:1520px;top:279px;width:38px;height:20px"><div class="az" style="left:0;top:2px;width:37px">F</div></div>
<div class="btn " style="left:1520px;top:300px;width:38px;height:20px"><div class="az" style="left:0;top:2px;width:37px">G</div></div>
<div class="btn " style="left:1520px;top:321px;width:38px;height:20px"><div class="az" style="left:0;top:2px;width:37px">H</div></div>
<div class="btn " style="left:1520px;top:342px;width:38px;height:20px"><div class="az" style="left:0;top:2px;width:37px">I</div></div>
<div class="btn " style="left:1520px;top:363px;width:38px;height:20px"><div class="az" style="left:0;top:2px;width:37px">J</div></div>
<div class="btn " style="left:1520px;top:384px;width:38px;height:20px"><div class="az" style="left:0;top:2px;width:37px">K</div></div>
<div class="btn " style="left:1520px;top:405px;width:38px;height:20px"><div class="az" style="left:0;top:2px;width:37px">L</div></div>
<div class="btn " style="left:1520px;top:426px;width:38px;height:20px"><div class="az" style="left:0;top:2px;width:37px">M</div></div>
<div class="btn " style="left:1520px;top:447px;width:38px;height:20px"><div class="az" style="left:0;top:2px;width:37px">N</div></div>
<div class="btn " style="left:1520px;top:468px;width:38px;height:20px"><div class="az" style="left:0;top:2px;width:37px">O</div></div>
<div class="btn " style="left:1520px;top:489px;width:38px;height:20px"><div class="az" style="left:0;top:2px;width:37px">P</div></div>
<div class="btn " style="left:1520px;top:510px;width:38px;height:20px"><div class="az" style="left:0;top:2px;width:37px">Q</div></div>
<div class="btn " style="left:1520px;top:531px;width:38px;height:20px"><div class="az" style="left:0;top:2px;width:37px">R</div></div>
<div class="btn " style="left:1520px;top:552px;width:38px;height:20px"><div class="az" style="left:0;top:2px;width:37px">S</div></div>
<div class="btn " style="left:1520px;top:573px;width:38px;height:20px"><div class="az" style="left:0;top:2px;width:37px">T</div></div>
<div class="btn " style="left:1520px;top:594px;width:38px;height:20px"><div class="az" style="left:0;top:2px;width:37px">U</div></div>
<div class="btn " style="left:1520px;top:615px;width:38px;height:20px"><div class="az" style="left:0;top:2px;width:37px">V</div></div>
<div class="btn " style="left:1520px;top:636px;width:38px;height:20px"><div class="az" style="left:0;top:2px;width:37px">W</div></div>
<div class="btn " style="left:1520px;top:657px;width:38px;height:20px"><div class="az" style="left:0;top:2px;width:37px">X</div></div>
<div class="btn " style="left:1520px;top:678px;width:38px;height:20px"><div class="az" style="left:0;top:2px;width:37px">Y</div></div>
<div class="btn " style="left:1520px;top:699px;width:38px;height:20px"><div class="az" style="left:0;top:2px;width:37px">Z</div></div>
<div class="sunk" style="left:1124px;top:213px;width:395px;height:509px;background:#fff"></div>
<div style="left:1126px;top:215px;width:365px;height:23px;background:#F0F0F0;border-top:1px solid #fff;border-left:1px solid #fff;border-bottom:1px solid #A0A0A0"></div>
<div class="t" style="left:1232.40px;top:218px;line-height:18px;letter-spacing:-0.162px;">Double Click to Select</div>
<div style="left:1126px;top:238px;width:364px;height:22px;background:#80FFFF"></div>
<div style="left:1126px;top:260px;width:364px;height:1px;background:#000"></div>
<div style="left:1126px;top:261px;width:364px;height:22px;background:#FF8080"></div>
<div style="left:1126px;top:283px;width:364px;height:1px;background:#000"></div>
<div style="left:1126px;top:284px;width:364px;height:22px;background:#FFC0C0"></div>
<div style="left:1126px;top:306px;width:364px;height:1px;background:#000"></div>
<div style="left:1126px;top:307px;width:364px;height:22px;background:#FF8080"></div>
<div style="left:1126px;top:329px;width:364px;height:1px;background:#000"></div>
<div style="left:1126px;top:330px;width:364px;height:22px;background:#FFC0C0"></div>
<div style="left:1126px;top:352px;width:364px;height:1px;background:#000"></div>
<div style="left:1126px;top:353px;width:364px;height:22px;background:#FF8080"></div>
<div style="left:1126px;top:375px;width:364px;height:1px;background:#000"></div>
<div style="left:1126px;top:376px;width:364px;height:22px;background:#FFC0C0"></div>
<div style="left:1126px;top:398px;width:364px;height:1px;background:#000"></div>
<div style="left:1126px;top:399px;width:364px;height:22px;background:#FF8080"></div>
<div style="left:1126px;top:421px;width:364px;height:1px;background:#000"></div>
<div style="left:1126px;top:422px;width:364px;height:22px;background:#FFC0C0"></div>
<div style="left:1126px;top:444px;width:364px;height:1px;background:#000"></div>
<div style="left:1126px;top:445px;width:364px;height:22px;background:#FF8080"></div>
<div style="left:1126px;top:467px;width:364px;height:1px;background:#000"></div>
<div style="left:1126px;top:468px;width:364px;height:22px;background:#FFC0C0"></div>
<div style="left:1126px;top:490px;width:364px;height:1px;background:#000"></div>
<div style="left:1126px;top:491px;width:364px;height:22px;background:#FF8080"></div>
<div style="left:1126px;top:513px;width:364px;height:1px;background:#000"></div>
<div style="left:1126px;top:514px;width:364px;height:22px;background:#FFC0C0"></div>
<div style="left:1126px;top:536px;width:364px;height:1px;background:#000"></div>
<div style="left:1126px;top:537px;width:364px;height:22px;background:#FF8080"></div>
<div style="left:1126px;top:559px;width:364px;height:1px;background:#000"></div>
<div style="left:1126px;top:560px;width:364px;height:22px;background:#FFC0C0"></div>
<div style="left:1126px;top:582px;width:364px;height:1px;background:#000"></div>
<div style="left:1126px;top:583px;width:364px;height:22px;background:#FF8080"></div>
<div style="left:1126px;top:605px;width:364px;height:1px;background:#000"></div>
<div style="left:1126px;top:606px;width:364px;height:22px;background:#FFC0C0"></div>
<div style="left:1126px;top:628px;width:364px;height:1px;background:#000"></div>
<div style="left:1126px;top:629px;width:364px;height:22px;background:#FF8080"></div>
<div style="left:1126px;top:651px;width:364px;height:1px;background:#000"></div>
<div style="left:1126px;top:652px;width:364px;height:22px;background:#FFC0C0"></div>
<div style="left:1126px;top:674px;width:364px;height:1px;background:#000"></div>
<div style="left:1126px;top:675px;width:364px;height:22px;background:#FF8080"></div>
<div style="left:1126px;top:697px;width:364px;height:1px;background:#000"></div>
<div style="left:1126px;top:698px;width:364px;height:22px;background:#FFC0C0"></div>
<div style="left:1490px;top:238px;width:1px;height:482px;background:#000"></div>
<div class="sb" style="left:1491px;top:215px;width:26px;height:505px"><div class="sbb" style="left:0;top:0;width:26px;height:26px"><svg style="left:5px;top:8px" width="13" height="7" viewBox="0 0 13 7" shape-rendering="crispEdges"><path d="M6 0h1v1h-1zM5 1h3v1h-3zM4 2h5v1h-5zM3 3h7v1h-7zM2 4h9v1h-9zM1 5h11v1h-11zM0 6h13v1h-13z" fill="#000"/></svg></div><div class="sbb" style="left:0;top:479px;width:26px;height:26px"><svg style="left:5px;top:9px" width="13" height="7" viewBox="0 0 13 7" shape-rendering="crispEdges"><path d="M0 0h13v1h-13zM1 1h11v1h-11zM2 2h9v1h-9zM3 3h7v1h-7zM4 4h5v1h-5zM5 5h3v1h-3zM6 6h1v1h-1z" fill="#000"/></svg></div><div class="sbb" style="left:0;top:26px;width:26px;height:279px"></div></div>
<div class="fr" style="left:1127px;top:742px;width:319px;height:48px"></div>
<div class="fbg" style="left:1134px;top:742px;width:165px;height:2px"></div>
<div class="t" style="left:1136.90px;top:735px;font-size:16px;line-height:18px;letter-spacing:-0.049px">Search for Items that...</div>
<div class="rad" style="left:1153px;top:757px"><i></i></div>
<div class="t" style="left:1176.80px;top:757px;line-height:18px;letter-spacing:-0.143px;">Start With</div>
<div class="rad" style="left:1274px;top:757px"></div>
<div class="t" style="left:1296.90px;top:757px;line-height:18px;letter-spacing:-0.171px;">Contain the word</div>
<div class="fbg" style="left:1118px;top:801px;width:440px;height:383px"></div>
<div class="fr" style="left:1118px;top:811px;width:439px;height:372px"></div>
<div class="fbg" style="left:1125px;top:811px;width:35px;height:2px"></div>
<div class="t" style="left:1128.70px;top:804px;font-size:16px;line-height:18px;letter-spacing:-1.114px">Plan</div>
<div class="btn " style="left:1163px;top:852px;width:158px;height:59px"><svg style="left:0;top:0" width="44" height="56" viewBox="0 0 44 56"><g transform="translate(-3,3)"><rect x="6" y="30" width="30" height="12" fill="#fff"/><rect x="27.3" y="35" width="8.5" height="1.4" fill="#C0C0C0"/><path d="M27.3 39.5H34.8V38" stroke="#C0C0C0" stroke-width="1.6" fill="none"/><rect x="26" y="13.2" width="5" height="1.2" fill="#fff"/><rect x="27.3" y="13.6" width="3" height="3.2" fill="#C4C4C4"/><path d="M24 19L26.5 16.2L28 18V25.2H24Z" fill="#C80000"/><path d="M25.2 19.8L26.6 18.2" stroke="#30E0F0" stroke-width="0.9"/><rect x="24.9" y="20.5" width="0.9" height="4.5" fill="#E8D0D0"/><path d="M27.4 17H31V19H32.2V35.7H27.4Z" fill="#C000C0"/><circle cx="28.5" cy="29.5" r="0.6" fill="#C00000"/><rect x="9.3" y="20.2" width="9.7" height="2.8" fill="#C4C4C4"/><rect x="9.3" y="20.2" width="1.8" height="2.8" fill="#fff"/><rect x="10" y="23" width="8" height="14.8" fill="#F00"/><rect x="17.2" y="23" width="0.8" height="14.8" fill="#D00000"/><rect x="11" y="24.2" width="1.2" height="12.6" fill="#FF0"/><rect x="20" y="25.2" width="7.8" height="1.8" fill="#D0D0D0"/><rect x="20" y="25.2" width="1.6" height="1.8" fill="#fff"/><rect x="21" y="27" width="6" height="13.8" fill="#F00"/><rect x="25.6" y="27" width="1.4" height="13.8" fill="#C00000"/><rect x="22" y="28.2" width="1.2" height="10.8" fill="#FF0"/></g></svg><div class="bt" style="left:-5px;top:22px;"><u>P</u>rescription</div></div>
<div class="btn " style="left:1322px;top:852px;width:158px;height:59px"><svg style="left:0;top:0" width="44" height="56" viewBox="0 0 44 56"><g transform="translate(-2,3)"><rect x="12.2" y="11" width="7.6" height="11.8" fill="#8A90C8"/><rect x="12.2" y="11" width="1" height="11.8" fill="#fff"/><rect x="14.2" y="12.6" width="4.8" height="8.6" fill="#0A7A30"/><path d="M15.5 14V20M17.3 14.5V18" stroke="#2A9A50" stroke-width="0.8"/><rect x="16" y="22.6" width="4" height="1" fill="#40E040"/><circle cx="20.4" cy="11.6" r="0.7" fill="#40E040"/><rect x="19.9" y="14" width="0.9" height="1.8" fill="#40E040"/><path d="M21 12.5C21 10.6 25.5 10.4 26.4 14.4L23.5 15.2Z" fill="#B06A20"/><path d="M21.5 13.4L23.6 13L24 15.6L22 15.8Z" fill="#E8C8B0"/><path d="M21 16.5L24.8 14.8C28 16 30.6 22 30.6 27.6L25 27.8L21.2 26Z" fill="#B8E8C8"/><path d="M26 16L29.5 24M24.5 21V27.5" stroke="#8CC8A0" stroke-width="0.8" fill="none"/><path d="M21 17V26.5" stroke="#D8B8A8" stroke-width="1.4"/><rect x="22.6" y="20.5" width="1.4" height="3.6" fill="#fff"/><path d="M10 28.5C10 33 19 35.6 25 35.6C28.5 35.6 29.6 32.5 29.4 30.5L19 27Z" fill="#7A3A10"/><path d="M10 27.6C10 31.5 19 34 25 34C28.5 34 29.6 31.5 29.4 29.5L19 26Z" fill="#30A830"/><path d="M11 28.8C13 31.4 18 32.6 23 33" stroke="#60D860" stroke-width="1" fill="none"/><path d="M9.7 25.2L13.5 24L18 25.5L16.6 28.6L12 28.4Z" fill="#4890E0"/><path d="M17.2 27.4L20 26.2L26 27L25.4 31.6L19 32.4Z" fill="#F0E080"/><path d="M25.4 27.2L29 27.2L30.2 29.5L29.6 32L25.2 31.8Z" fill="#800000"/><path d="M27.2 30.5L28.8 30L29.2 32.2L27.4 32.6Z" fill="#30A830"/><path d="M21.4 34L24.9 34.4L24.4 42.9L22 42.9Z" fill="#7A3A10"/><path d="M27.8 33L29.9 32V39.5L28.2 39.5Z" fill="#7A3A10"/></g></svg><div class="bt" style="left:-5px;top:12px;">Other</div><div class="bt" style="left:-5px;top:32px;"><u>T</u>reatment</div></div>
<div class="btn " style="left:1163px;top:912px;width:158px;height:59px"><svg style="left:0;top:0" width="44" height="56" viewBox="0 0 44 56"><g transform="translate(-3,3)"><path d="M19.5 41.6L29 41.6L32 39.5L36.8 38.6L36.8 37.5" stroke="#A8A8A8" stroke-width="1.2" fill="none"/><rect x="9" y="12" width="7" height="25" fill="#fff"/><rect x="12.5" y="12.5" width="3.5" height="15.5" fill="#C0C0C0"/><rect x="11.2" y="28" width="4.8" height="9" fill="#C8E0F8"/><rect x="9.9" y="28" width="1.2" height="9" fill="#FF0"/><rect x="15" y="29" width="1" height="7.8" fill="#A000A0"/><path d="M12.2 19.8H16M12.2 22.5H16M12.2 25.3H16M12.2 28.2H16M12.2 31.2H16M12.2 34H16" stroke="#000" stroke-width="1"/><path d="M6.1 11.6H17M8.6 12L8.6 37M16.5 12V37" stroke="#000" stroke-width="1.1" fill="none"/><path d="M6.5 12L8.6 13.6" stroke="#000" stroke-width="1"/><path d="M8 37H17L18.5 40H5.3Z" fill="#A000A0"/><rect x="8.8" y="38" width="6.5" height="0.9" fill="#C8E0F8"/><rect x="8.8" y="38" width="1.3" height="0.9" fill="#FF0"/><path d="M5.2 40.5H18.6" stroke="#000" stroke-width="1.1"/><path d="M8 37L5.4 40M17 37L18.5 40" stroke="#000" stroke-width="0.9"/><rect x="21.8" y="21" width="14.6" height="16.5" fill="#fff"/><rect x="31" y="21.2" width="5" height="6" fill="#B0B0B0"/><rect x="28" y="27" width="5.5" height="10.6" fill="#00FFFF"/><rect x="33" y="27" width="3.5" height="10.6" fill="#00A0A0"/><path d="M28 37.5L36.4 37.5L36.4 36L33 38.2L30 38.2Z" fill="#00A0A0"/><rect x="33.2" y="27.5" width="0.7" height="6.5" fill="#80FFFF"/><path d="M21.3 20.7H36.9V37.4L34.5 38.6H30" stroke="#000" stroke-width="1.1" fill="none"/><path d="M21.6 21L24 23.5V25.2" stroke="#000" stroke-width="1" fill="none"/><path d="M31.2 11.2L21.2 40.6" stroke="#B8B8B8" stroke-width="1.1"/><path d="M31.2 11.2L21.2 40.6" stroke="#0000B0" stroke-width="1.1" stroke-dasharray="1.1 1.1"/><path d="M22.4 26.4H27.4V28.2L30.8 38.6L29 41H20.4L18.2 38.6L22.4 28.2Z" fill="#00E020"/><path d="M25.4 27L29.8 38.8L28.6 40.4H25Z" fill="#20E8B0"/><path d="M23 27.2L21.8 31L19.6 37.6" stroke="#fff" stroke-width="1.5" fill="none"/><path d="M20.2 25.7H29M22.4 26.4V28.2L18.2 38.6L20.4 41H29L30.8 38.6L27.4 28.2V26.4" stroke="#000" stroke-width="1.1" fill="none"/></g></svg><div class="bt" style="left:-5px;top:22px;">Lab Req</div></div>
<div class="btn " style="left:1322px;top:912px;width:158px;height:59px"><svg style="left:0;top:0" width="44" height="56" viewBox="0 0 44 56"><g transform="translate(-2,3)"><path d="M4 18.5L10.1 12.2H13.9L16.8 15.6L12.6 20.8H4Z" fill="#F8F800"/><path d="M36.4 18.5L30.3 12.2H26.5L23.6 15.6L27.8 20.8H36.4Z" fill="#F8F800"/><path d="M5 19.6L11 13.6M8 20L13.2 14.2M11 20.4L15.4 15.4M4.2 20.5H12.5" stroke="#A8A800" stroke-width="0.9" fill="none"/><path d="M35.4 19.6L29.4 13.6M32.4 20L27.2 14.2M29.4 20.4L25 15.4M36.2 20.5H27.9" stroke="#A8A800" stroke-width="0.9" fill="none"/><path d="M18 11.2H21.8V12.2H22.9V13.8H16.8V12.2H18Z" fill="#F8F800"/><path d="M21 11.3H22V12.4H22.9V13.8H21Z" fill="#B0B000"/><rect x="13.6" y="14.8" width="13" height="1.6" fill="#C8C800"/><path d="M21.6 17.2C25.5 17.2 27.5 19.5 27 22.2C26.6 24 25 25 23.5 25.8" stroke="#0000E8" stroke-width="3.1" fill="none"/><path d="M19 17.2C14.5 17.2 12.6 20 13.6 22.6C15 25.8 25.8 26.6 25.8 30.6C25.8 33 24 34.4 22.6 35.6" stroke="#F80000" stroke-width="3.1" fill="none"/><path d="M16.4 26.4C13.6 28 13.4 30.6 15 32.4C17 34.6 22.5 35.8 22.6 38.4C22.6 40 21.6 41 20.8 41.8" stroke="#0000E8" stroke-width="3.1" fill="none"/><path d="M17.2 38.4L18.6 41.4" stroke="#F80000" stroke-width="2.8" fill="none"/><path d="M16.2 22.4L19 21L21.5 21L23.6 22.6L21.5 24L18.6 23.6ZM17.2 29.5L19 28.4H21.6L22.6 30.6L21.4 32.4L19.4 31.8Z" fill="#fff"/><rect x="18.9" y="13" width="3" height="30" fill="#F8F800"/><rect x="20.5" y="13" width="1.4" height="30" fill="#B8B800"/></g></svg><div class="bt" style="left:-5px;top:22px;"><u>O</u>ther</div></div>
<div class="btn " style="left:1163px;top:972px;width:158px;height:59px"><svg style="left:0;top:0" width="44" height="56" viewBox="0 0 44 56"><g transform="translate(-3,3)"><path d="M22.5 12.2L35.7 25.7L19.2 42.7L5.3 29.4Z" fill="#fff"/><path d="M5.3 29.4L22.5 12.2" stroke="#808080" stroke-width="0.8"/><path d="M22.5 12.2L35.7 25.7L19.2 42.7" stroke="#000" stroke-width="1.5" fill="none"/><path d="M19.2 42.7L5.3 29.4" stroke="#000" stroke-width="0.9"/><path d="M11.4 30.5L22.9 19.3M14.3 33.6L18.5 29.2M17.2 36.6L21.9 32.2" stroke="#000" stroke-width="1.2"/><path d="M23.6 29.4L34 19" stroke="#C8C8C8" stroke-width="1.4"/><path d="M22.6 27.6L33.6 16.4" stroke="#000" stroke-width="4.2"/><path d="M22.6 26.8L33.2 16" stroke="#FFFF00" stroke-width="2.6"/><path d="M21.2 26.2L32 15.4" stroke="#A0A000" stroke-width="0.9" stroke-dasharray="1 0.8"/><path d="M21 26.4L23.4 28.8L20.4 30.4Z" fill="#E0E0E0"/><path d="M20.2 29.6L21.8 30.8L19.6 31.4Z" fill="#000"/><circle cx="35.2" cy="14.6" r="2.1" fill="#000"/><circle cx="34.9" cy="14.2" r="1.7" fill="#F00000"/><circle cx="34.6" cy="13.6" r="0.6" fill="#fff"/><path d="M33 15.6L34.2 17" stroke="#008080" stroke-width="1.3"/></g></svg><div class="bt" style="left:-5px;top:12px;">Other</div><div class="bt" style="left:-5px;top:32px;">Requisition</div></div>
<div class="btn " style="left:1322px;top:972px;width:158px;height:59px"><svg style="left:0;top:0" width="44" height="56" viewBox="0 0 44 56"><g transform="translate(-2,3)"><path d="M5.5 39.9L24.8 39.9L34.9 29L34.9 31L25 42.6L6.2 42.6Z" fill="#F00000" stroke="#000" stroke-width="0.9"/><path d="M8 41.3H23" stroke="#fff" stroke-width="0.9" stroke-dasharray="1 1"/><path d="M25 41.5L33.6 31.5" stroke="#000" stroke-width="0.9" stroke-dasharray="1 1"/><path d="M31 29.2H35" stroke="#000" stroke-width="1.2"/><path d="M26.9 22.3H31.1V34.9H26.9Z" fill="#fff" stroke="#000" stroke-width="1"/><path d="M28.8 23.8V34.5" stroke="#000" stroke-width="1"/><path d="M24.8 30.5H28.6V35.2H24.8Z" fill="#fff" stroke="#000" stroke-width="0.9"/><rect x="10.1" y="19.3" width="16.8" height="10.6" fill="#fff" stroke="#000" stroke-width="1.2"/><path d="M12.2 22.5H21M12.2 24.4H17M12.2 26.5H19M20 26.5H21" stroke="#A0A0A0" stroke-width="0.8"/><rect x="8.2" y="28.4" width="16.6" height="11" fill="#fff" stroke="#000" stroke-width="1.2"/><path d="M10.9 31.3H18.9M10.9 33.4H16M10.9 35.5H18.4" stroke="#606060" stroke-width="0.8" stroke-dasharray="1 0.6"/><path d="M9.4 38.2L13 35M19 38L22.6 34.2" stroke="#C0C0C0" stroke-width="0.7"/><path d="M12.2 38.6L13 37.4L13.8 38.6M17.4 38.6L18.2 37.4L19 38.6" stroke="#000" stroke-width="0.9" fill="none"/><path d="M5 12.4H18L20.6 15.4V19.2H16.2L12.4 18.4L9 16.6H5Z" fill="#fff"/><path d="M5 12.4H18L20.6 15.4V19.4M5 16.6H9L12.4 18.6" stroke="#000" stroke-width="1.1" fill="none"/><rect x="7.1" y="11.1" width="1.9" height="6.6" fill="#000"/><ellipse cx="17.5" cy="17.6" rx="1.5" ry="2.2" fill="#fff" stroke="#000" stroke-width="1"/></g></svg><div class="bt" style="left:-5px;top:22px;">Quick Req.</div></div>
<div class="chk" style="left:1190px;top:1043px"></div>
<div class="t" style="left:1215.30px;top:1044px;line-height:18px;letter-spacing:-0.118px;">Add Task to follow up Requisitions</div>
</body></html>
